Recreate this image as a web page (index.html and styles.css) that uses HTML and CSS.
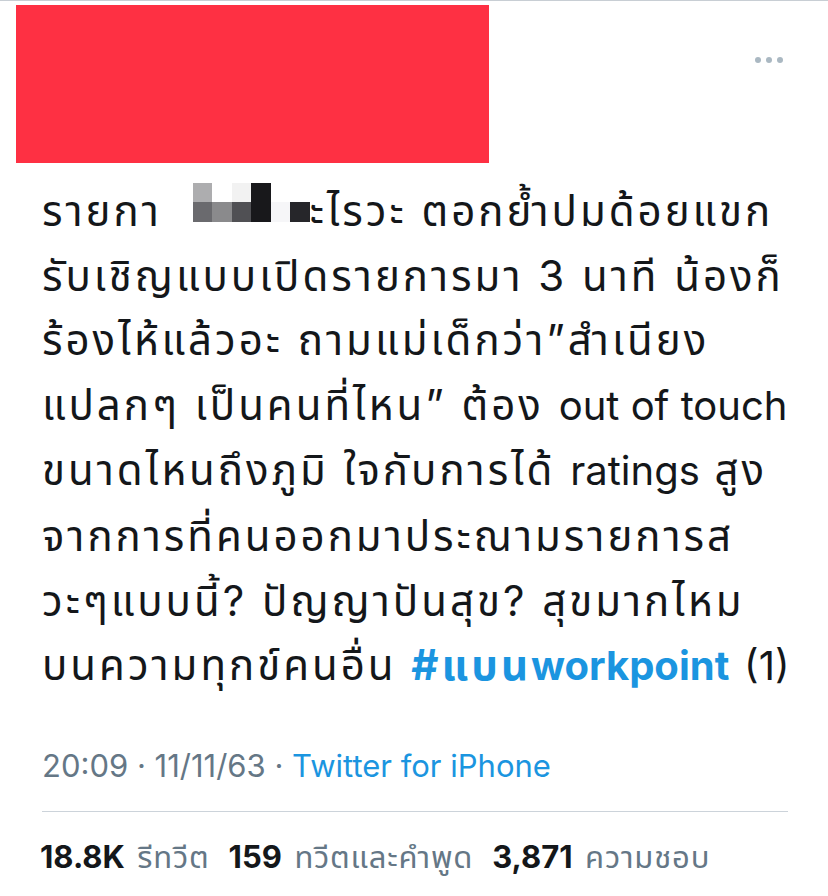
FILE: index.html
```html
<!DOCTYPE html>
<html lang="th">
<head>
<meta charset="utf-8">
<link rel="stylesheet" href="styles.css">
</head>
<body>
<div class="topline"></div>
<header class="head">
  <div class="redact"></div>
  <div class="more"><span></span><span></span><span></span></div>
</header>
<p class="tweet">รายกา<span class="mosaic"><span class="row"><i class="a"></i><i class="w"></i><i class="b"></i><i class="k"></i><i class="w"></i><i class="w"></i></span><span class="row"><i class="c"></i><i class="d"></i><i class="e"></i><i class="k"></i><i class="f"></i><i class="g"></i></span></span>ะไรวะ ตอกย้ำปมด้อยแขก<br>รับเชิญแบบเปิดรายการมา 3 นาที น้องก็<br>ร้องไห้แล้วอะ ถามแม่เด็กว่า”สำเนียง<br>แปลกๆ เป็นคนที่ไหน” ต้อง <span class="lat">out of touch</span><br>ขนาดไหนถึงภูมิ ใจกับการได้ <span class="lat">ratings</span> สูง<br>จากการที่คนออกมาประณามรายการส<br>วะๆแบบนี้? ปัญญาปันสุข? สุขมากไหม<br>บนความทุกข์คนอื่น <span class="tag">#แบน<span class="lat">workpoint</span></span> <span class="lat">(1)</span></p>
<div class="meta">20:09 · 11/11/63 · <span class="src">Twitter for iPhone</span></div>
<div class="rule"></div>
<div class="stats">
  <span class="stat"><b>18.8K</b> รีทวีต</span>
  <span class="stat"><b>159</b> ทวีตและคำพูด</span>
  <span class="stat"><b>3,871</b> ความชอบ</span>
</div>
</body>
</html>
```
FILE: styles.css
```css
html, body {
  margin: 0;
  padding: 0;
  background: #ffffff;
}
body {
  width: 828px;
  height: 896px;
  overflow: hidden;
  font-family: "Inter", "Noto Sans Thai", "Noto Sans", sans-serif;
  color: #14171a;
}
.topline {
  height: 1px;
  background: #c8ced4;
}
.head {
  display: flex;
  justify-content: space-between;
  align-items: flex-start;
  padding: 4px 0 0 16px;
}
.redact {
  width: 473px;
  height: 158px;
  background: #fe3043;
}
.more {
  display: flex;
  gap: 5px;
  margin: 52px 45px 0 0;
}
.more span {
  width: 6px;
  height: 6px;
  border-radius: 50%;
  background: #aab8c2;
}
.tweet {
  margin: 16px 0 0 42px;
  font-size: 42px;
  line-height: 64.6px;
  letter-spacing: 3px;
  white-space: nowrap;
}
.lat {
  font-size: 40px;
  letter-spacing: 0;
}
.mosaic {
  display: inline-block;
  vertical-align: top;
  margin: 4px 0 0 31px;
  letter-spacing: 0;
}
.mosaic .row {
  display: flex;
}
.mosaic i {
  display: block;
  width: 19.5px;
  height: 19px;
}
.mosaic .row + .row i { height: 20px; }
.mosaic .a { background: #adadaf; }
.mosaic .w { background: #ffffff; }
.mosaic .b { background: #f2f2f2; }
.mosaic .k { background: #18181b; }
.mosaic .c { background: #6a6a6e; }
.mosaic .d { background: #8a8a8c; }
.mosaic .e { background: #505054; }
.mosaic .f { background: #f6f6f8; }
.mosaic .g { background: #26262a; }
.tag {
  color: #1b95e0;
  font-weight: 700;
}
.meta {
  margin: 47px 0 0 42px;
  font-size: 31px;
  line-height: 40px;
  color: #657786;
}
.src { color: #1b95e0; }
.rule {
  margin: 25px 40px 0 42px;
  height: 1.5px;
  background: #ccd3da;
}
.stats {
  display: flex;
  gap: 19px;
  margin: 25px 0 0 40px;
  font-size: 31px;
  line-height: 40px;
  color: #657786;
  letter-spacing: 0.8px;
}
.stats b {
  color: #14171a;
  font-weight: 700;
  letter-spacing: 0;
  margin-right: 3px;
}
```
